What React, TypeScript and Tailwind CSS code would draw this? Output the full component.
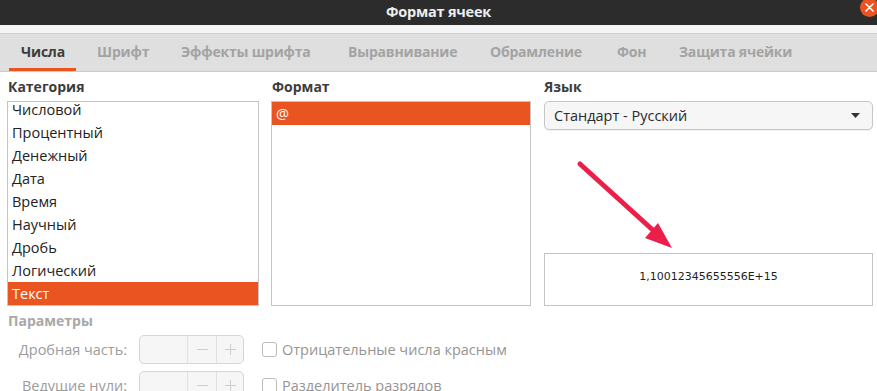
import React from "react";

const tabs = [
  { label: "Числа", w: "w-[76px]", active: true },
  { label: "Шрифт", w: "w-[84px]" },
  { label: "Эффекты шрифта", w: "w-[167px]" },
  { label: "Выравнивание", w: "w-[142px]" },
  { label: "Обрамление", w: "w-[127px]" },
  { label: "Фон", w: "w-[62px]" },
  { label: "Защита ячейки", w: "w-[140px]" },
];

const categories = [
  "Числовой",
  "Процентный",
  "Денежный",
  "Дата",
  "Время",
  "Научный",
  "Дробь",
  "Логический",
  "Текст",
];

function SpinBox() {
  return (
    <div className="flex h-[29px] w-[105px] rounded-[5px] border border-[#d6d6d6] bg-[#f6f6f6] text-[#cfcfcf]">
      <div className="w-[47px]" />
      <div className="flex w-[29px] items-center justify-center border-l border-[#e0e0e0]">
        <svg width="11" height="11" viewBox="0 0 11 11">
          <path d="M0 5.5H11" stroke="#cdcdcd" strokeWidth="1" />
        </svg>
      </div>
      <div className="flex flex-1 items-center justify-center border-l border-[#e0e0e0]">
        <svg width="11" height="11" viewBox="0 0 11 11">
          <path d="M0 5.5H11M5.5 0V11" stroke="#cdcdcd" strokeWidth="1" />
        </svg>
      </div>
    </div>
  );
}

export default function App() {
  return (
    <div className="relative h-[391px] w-[877px] overflow-hidden bg-white font-['Open_Sans',sans-serif]">
      {/* Title bar */}
      <div className="relative flex h-[25px] items-center justify-center bg-[#2c2c2c]">
        <span className="text-[14.5px] font-bold leading-none tracking-[-0.2px] text-[#eeeeee]">Формат ячеек</span>
        <div className="absolute left-[860px] top-[-2px] flex h-[19px] w-[19px] items-center justify-center rounded-full bg-[#e95420]">
          <svg width="9" height="9" viewBox="0 0 9 9">
            <path d="M1 1L8 8M8 1L1 8" stroke="#ffffff" strokeWidth="1.6" strokeLinecap="round" />
          </svg>
        </div>
      </div>
      <div className="h-[9px] border-b border-[#cdcdcd] bg-[#f5f5f5]" />
      {/* Tabs */}
      <div className="flex h-[38px] border-b border-[#cbcbcb] bg-[#dfdfdf] pl-[9px]">
        {tabs.map((t) => (
          <div key={t.label} className={`${t.w} flex flex-col`}>
            <div
              className={`flex flex-1 items-center pl-[12px] pt-[1px] text-[14px] font-bold tracking-[-0.2px] whitespace-nowrap ${
                t.active ? "text-[#3c3c3c]" : "text-[#a3a3a3]"
              }`}
            >
              {t.label}
            </div>
            <div className={`h-[3px] w-[67px] ${t.active ? "bg-[#e95420]" : ""}`} />
          </div>
        ))}
      </div>

      {/* Content */}
      <div className="flex gap-[12px] pl-[7px] pt-[6px]">
        {/* Category */}
        <div className="flex w-[252px] flex-col">
          <div className="mb-[6px] pl-[1px] text-[14px] font-bold leading-[17px] text-[#3c3c3c]">Категория</div>
          <div className="h-[205px] overflow-hidden border border-[#c4c4c4]">
            <div className="-mt-[4px]">
              {categories.map((c) => (
                <div
                  key={c}
                  className={`flex h-[23px] items-center pl-[4px] text-[14.5px] ${
                    c === "Текст" ? "bg-[#e95420] text-white" : "text-[#222222]"
                  }`}
                >
                  {c}
                </div>
              ))}
            </div>
          </div>
        </div>
        {/* Format */}
        <div className="flex w-[260px] flex-col">
          <div className="mb-[6px] pl-[1px] text-[14px] font-bold leading-[17px] text-[#3c3c3c]">Формат</div>
          <div className="h-[205px] overflow-hidden border border-[#c4c4c4]">
            <div className="flex h-[23px] items-center bg-[#e95420] pl-[4px] text-[14.5px] text-white">@</div>
          </div>
        </div>
        {/* Language */}
        <div className="ml-[1px] flex w-[329px] flex-col">
          <div className="mb-[6px] text-[14px] font-bold leading-[17px] text-[#3c3c3c]">Язык</div>
          <div className="flex h-[29px] items-center justify-between rounded-[5px] border border-[#c6c6c6] bg-[#f6f6f6] pl-[9px] pr-[12px] shadow-[0_1px_1px_rgba(0,0,0,0.06)]">
            <span className="text-[14.5px] text-[#2a2a2a]">Стандарт - Русский</span>
            <svg width="9" height="5" viewBox="0 0 9 5">
              <path d="M0 0H9L4.5 5Z" fill="#333333" />
            </svg>
          </div>
          <div className="mt-[123px] flex h-[53px] items-center justify-center border border-[#c4c4c4] pb-[4px]">
            <span className="font-['DejaVu_Sans',sans-serif] text-[11px] text-[#1e1e1e]">1,10012345655556E+15</span>
          </div>
        </div>
      </div>

      {/* Parameters */}
      <div className="pl-[8px]">
        <div className="mt-[6px] text-[14px] font-bold leading-[17px] text-[#a8a8a8]">Параметры</div>
        <div className="mt-[6px] flex flex-col gap-[7px]">
          {[
            ["Дробная часть:", "Отрицательные числа красным"],
            ["Ведущие нули:", "Разделитель разрядов"],
          ].map(([label, check]) => (
            <div key={label} className="flex items-center">
              <div className="w-[120px] pr-[1px] text-right text-[14.5px] text-[#9c9c9c]">{label}</div>
              <div className="ml-[11px]">
                <SpinBox />
              </div>
              <div className="ml-[18px] h-[15px] w-[15px] rounded-[3px] border border-[#bcbcbc] bg-white" />
              <div className="ml-[5px] text-[14.5px] text-[#959595]">{check}</div>
            </div>
          ))}
        </div>
      </div>

      {/* Red annotation arrow */}
      <svg className="pointer-events-none absolute left-0 top-0" width="877" height="391" viewBox="0 0 877 391">
        <path d="M580 164L655 232" stroke="#ec1e4a" strokeWidth="5" strokeLinecap="round" />
        <polygon points="672,248 645,238 658,223" fill="#ec1e4a" />
      </svg>
    </div>
  );
}
